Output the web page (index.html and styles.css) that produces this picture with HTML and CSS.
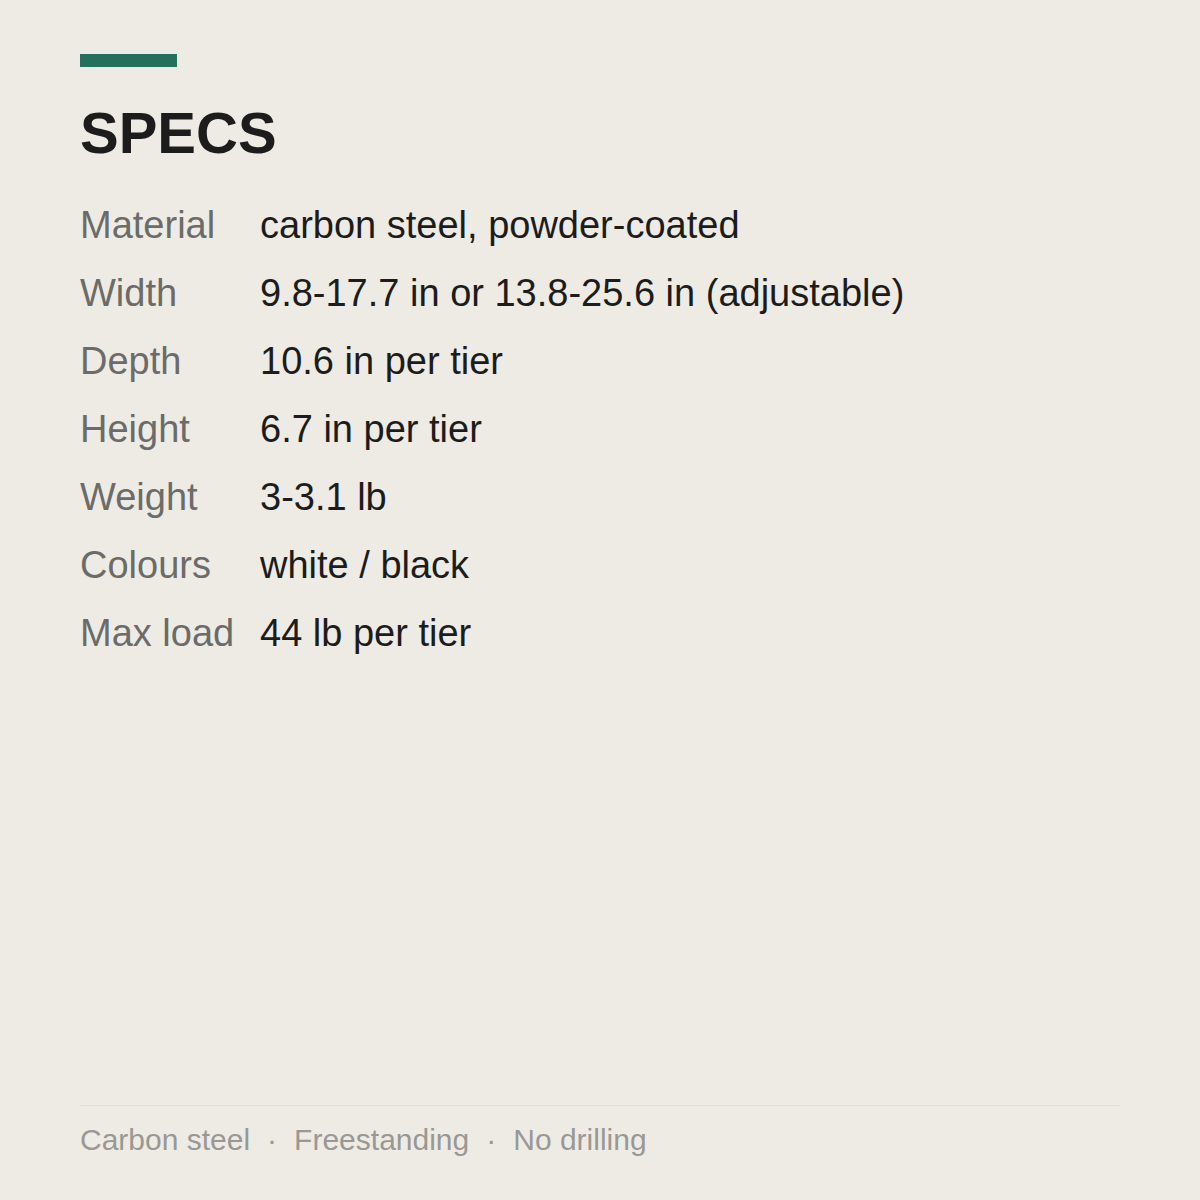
FILE: index.html
```html
<!DOCTYPE html>
<html lang="en">
<head>
    <meta charset="UTF-8">
    <meta name="viewport" content="width=device-width, initial-scale=1.0">
    <title>Specs</title>
    <link rel="stylesheet" href="styles.css">
</head>
<body>
    <div class="page">
        <header class="header">
            <div class="accent-bar"></div>
            <h1 class="title">SPECS</h1>
        </header>

        <dl class="spec-list">
            <div class="spec-row">
                <dt class="spec-label">Material</dt>
                <dd class="spec-value">carbon steel, powder-coated</dd>
            </div>
            <div class="spec-row">
                <dt class="spec-label">Width</dt>
                <dd class="spec-value">9.8-17.7 in or 13.8-25.6 in (adjustable)</dd>
            </div>
            <div class="spec-row">
                <dt class="spec-label">Depth</dt>
                <dd class="spec-value">10.6 in per tier</dd>
            </div>
            <div class="spec-row">
                <dt class="spec-label">Height</dt>
                <dd class="spec-value">6.7 in per tier</dd>
            </div>
            <div class="spec-row">
                <dt class="spec-label">Weight</dt>
                <dd class="spec-value">3-3.1 lb</dd>
            </div>
            <div class="spec-row">
                <dt class="spec-label">Colours</dt>
                <dd class="spec-value">white / black</dd>
            </div>
            <div class="spec-row">
                <dt class="spec-label">Max load</dt>
                <dd class="spec-value">44 lb per tier</dd>
            </div>
        </dl>

        <footer class="footer">
            <span>Carbon steel</span>
            <span class="dot">·</span>
            <span>Freestanding</span>
            <span class="dot">·</span>
            <span>No drilling</span>
        </footer>
    </div>
</body>
</html>
```

FILE: styles.css
```css
* {
    margin: 0;
    padding: 0;
    box-sizing: border-box;
}

body {
    background: #eeebe5;
    font-family: "Liberation Sans", Arial, sans-serif;
    color: #1c1c1c;
}

.page {
    height: 1200px;
    padding: 54px 80px 0;
    display: flex;
    flex-direction: column;
}

.accent-bar {
    width: 97px;
    height: 13px;
    background: #24705c;
}

.title {
    margin-top: 30px;
    font-size: 58px;
    line-height: 72px;
    font-weight: bold;
    color: #1c1c1c;
}

.spec-list {
    margin-top: 22px;
    display: flex;
    flex-direction: column;
}

.spec-row {
    display: flex;
    font-size: 38px;
    line-height: 68px;
}

.spec-label {
    width: 180px;
    flex-shrink: 0;
    color: #6b6b69;
}

.spec-value {
    color: #1c1c1c;
}

.footer {
    margin-top: auto;
    height: 95px;
    border-top: 1px solid #e3e0da;
    display: flex;
    align-items: center;
    gap: 17px;
    font-size: 30px;
    color: #999894;
    padding-bottom: 26px;
}

.dot {
    color: #999894;
}
```
